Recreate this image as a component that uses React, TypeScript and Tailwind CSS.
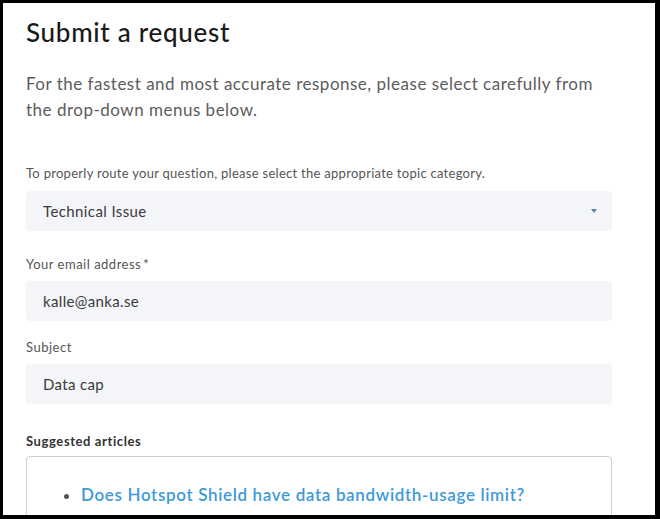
export default function App() {
  const fields = [
    { label: "Your email address", required: true, value: "kalle@anka.se" },
    { label: "Subject", required: false, value: "Data cap" },
  ];

  return (
    <div
      className="w-[660px] h-[519px] overflow-hidden bg-white border-black border-t-[3px] border-l-[3px] border-r-[5px] border-b-[4px]"
      style={{ fontFamily: "Lato, 'Open Sans', sans-serif" }}
    >
      <div className="pl-[23px] pr-[43px] pt-[13px]">
        <h1 className="text-[26px] leading-[32px] font-medium tracking-[0.7px] text-[#1a1a1a]">
          Submit a request
        </h1>
        <p className="mt-[23px] text-[17px] leading-[26px] tracking-[0.5px] text-[#5c5c5c]">
          For the fastest and most accurate response, please select carefully from
          the drop-down menus below.
        </p>

        {/* topic */}
        <label className="block mt-[41px] text-[13px] leading-[18px] tracking-[0.28px] text-[#555]">
          To properly route your question, please select the appropriate topic category.
        </label>
        <div className="mt-[9px] h-10 rounded-[4px] bg-[#f3f5f8] flex items-center justify-between pl-[17px] pr-[15px]">
          <span className="text-[15px] tracking-[0.4px] text-[#3a3a3a]">Technical Issue</span>
          <span className="w-0 h-0 border-l-[3px] border-r-[3px] border-t-[4px] border-l-transparent border-r-transparent border-t-[#5b7fa8]" />
        </div>

        {fields.map((f, i) => (
          <div key={f.label} className={i === 0 ? "mt-[24px]" : "mt-[17px]"}>
            <label className="block text-[13px] leading-[18px] tracking-[0.5px] text-[#555]">
              {f.label}
              {f.required && <span className="ml-[2px]">*</span>}
            </label>
            <div className="mt-[8px] h-10 rounded-[4px] bg-[#f3f5f8] flex items-center pl-[17px]">
              <span className="text-[15px] tracking-[0.35px] text-[#3a3a3a]">{f.value}</span>
            </div>
          </div>
        ))}

        <div className="mt-[28px] text-[13px] leading-[18px] font-bold tracking-[0.6px] text-[#333]">
          Suggested articles
        </div>
        <div className="mt-[6px] border border-[#cfcfcf] rounded-t-[4px] h-[80px] pt-[26px] pl-[36px]">
          <ul className="list-disc pl-[18px] marker:text-[#555]">
            <li>
              <a href="#" className="text-[17px] leading-[22px] font-semibold tracking-[0.65px] text-[#3d9ad8]">
                Does Hotspot Shield have data bandwidth-usage limit?
              </a>
            </li>
          </ul>
        </div>
      </div>
    </div>
  );
}
